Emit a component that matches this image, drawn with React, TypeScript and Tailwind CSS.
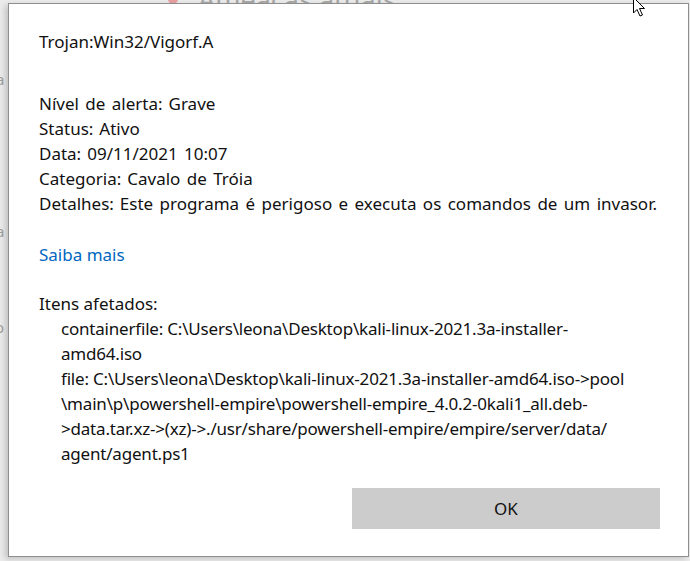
import React from 'react';

const details = [
  { label: 'Nível de alerta:', value: 'Grave' },
  { label: 'Status:', value: 'Ativo' },
  { label: 'Data:', value: '09/11/2021 10:07' },
  { label: 'Categoria:', value: 'Cavalo de Tróia' },
  { label: 'Detalhes:', value: 'Este programa é perigoso e executa os comandos de um invasor.' },
];

const affected = [
  'containerfile: C:\\Users\\leona\\Desktop\\kali-linux-2021.3a-installer-',
  'amd64.iso',
  'file: C:\\Users\\leona\\Desktop\\kali-linux-2021.3a-installer-amd64.iso->pool',
  '\\main\\p\\powershell-empire\\powershell-empire_4.0.2-0kali1_all.deb-',
  '>data.tar.xz->(xz)->./usr/share/powershell-empire/empire/server/data/',
  'agent/agent.ps1',
];

const Cursor = () => (
  <svg width="14" height="22" viewBox="0 0 14 22" className="absolute left-[632px] top-[-4px]">
    <path
      d="M1.5 1.5 L1.5 17 L5 13.5 L8 20 L10.5 19 L7.5 12.5 L12.5 12.5 Z"
      fill="#fff"
      stroke="#000"
      strokeWidth="1"
    />
  </svg>
);

export default function App() {
  return (
    <div
      className="relative w-[690px] h-[561px] overflow-hidden bg-[#ececec]"
      style={{ fontFamily: '"Noto Sans", "Open Sans", sans-serif' }}
    >
      {/* faded window behind the dialog */}
      <div className="absolute left-[168px] top-[-6px] w-[10px] h-[10px] rounded-full bg-[#e8a0a0]" />
      <div className="absolute left-[198px] top-[-20px] text-[27px] text-[#a8a8a8] whitespace-nowrap">Ameaças atuais</div>
      <div className="absolute left-[-4px] top-[68px] text-[15px] text-[#a0a0a0]">a</div>
      <div className="absolute left-[-4px] top-[220px] text-[15px] text-[#a0a0a0]">a</div>
      <div className="absolute left-[-5px] top-[316px] text-[15px] text-[#a0a0a0]">o</div>

      <div className="relative ml-[8px] mt-[3px] w-[681px] h-[554px] flex flex-col bg-white border border-[#8e8e8e] shadow-[-3px_2px_6px_rgba(0,0,0,0.18)] text-[#111] text-[17px] leading-[25px]">
        <div className="flex flex-col pl-[30px] pt-[25px]">
          <div>Trojan:Win32/Vigorf.A</div>

          <div className="flex flex-col mt-[37px] [word-spacing:2px]">
            {details.map((d) => (
              <div key={d.label} className="whitespace-nowrap">
                {d.label}
                <span className="ml-[6px]">{d.value}</span>
              </div>
            ))}
          </div>

          <div className="mt-[26px] text-[#0067c0]">Saiba mais</div>

          <div className="mt-[24px]">Itens afetados:</div>
          <div className="flex flex-col pl-[22px] tracking-[-0.2px]">
            {affected.map((line, i) => (
              <div key={i} className="whitespace-nowrap">
                {line}
              </div>
            ))}
          </div>
        </div>

        <div className="flex justify-end pr-[28px] mt-[22px]">
          <button className="w-[308px] h-[41px] bg-[#cccccc] text-[17px] text-[#111]">OK</button>
        </div>
      </div>

      <Cursor />
    </div>
  );
}
